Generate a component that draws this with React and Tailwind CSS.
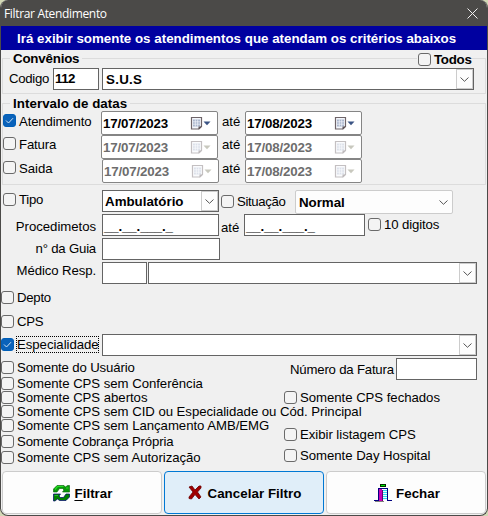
import React from "react";

function Check({ on, className = "" }) {
  return (
    <span
      className={`flex h-[13px] w-[13px] shrink-0 items-center justify-center rounded-[3px] border ${
        on ? "border-[#005fb8] bg-[#0a62ba]" : "border-[#6a6a6a] bg-[#f4f4f4]"
      } ${className}`}
    >
      {on && (
        <svg width="9" height="9" viewBox="0 0 9 9" fill="none" stroke="#cfe3f5" strokeWidth="1">
          <path d="M1 4.5 L3.5 7 L8 2.2" />
        </svg>
      )}
    </span>
  );
}

function Text({ children, className = "" }) {
  return <span className={`shrink-0 whitespace-nowrap leading-[16px] ${className}`}>{children}</span>;
}

function Chevron() {
  return (
    <svg width="9" height="5" viewBox="0 0 9 5" fill="none" stroke="#555" strokeWidth="1">
      <path d="M0.5 0.5 L4.5 4.3 L8.5 0.5" />
    </svg>
  );
}

function Field({ children, className = "" }) {
  return (
    <div className={`flex h-[22px] shrink-0 items-center border border-[#646464] bg-white text-[13.33px] font-bold ${className}`}>
      {children}
    </div>
  );
}

function Combo({ children, className = "" }) {
  return (
    <Field className={`justify-between ${className}`}>
      <Text className="mt-px">{children}</Text>
      <span className="flex h-[20px] w-[17px] shrink-0 items-center justify-center border border-[#cccccc] bg-[#fdfdfd]">
        <Chevron />
      </span>
    </Field>
  );
}

function DateField({ children, off, className = "" }) {
  return (
    <div
      className={`flex h-[24px] w-[117px] shrink-0 items-center rounded-[2px] border border-[#858585] bg-white pl-px text-[13.33px] font-bold ${
        off ? "text-[#6d6d6d]" : "text-black"
      } ${className}`}
    >
      <Text className="mt-px w-[87px] tracking-[-0.16px]">{children}</Text>
      <svg width="21" height="13" viewBox="0 0 21 13" className={off ? "opacity-40" : ""}>
        <path d="M1.5 0.5 H11.5 V9.5 L9 12 H1.5 Z" fill="#f4f7fc" stroke="#6e6468" strokeWidth="1.2" />
        <path d="M3 2.5H10V9.5H3Z" fill="#a9b5cc" />
        <path d="M3 4.8H10M3 7.2H10M5.3 2.5V9.5M7.7 2.5V9.5" stroke="#f4f7fc" strokeWidth="0.7" />
        <path d="M8.5 12.5V9.5H12Z" fill="#5d5357" />
        <path d="M13.5 4.5H20.5L17 8.2Z" fill={off ? "#77775f" : "#3b5484"} />
      </svg>
    </div>
  );
}

function DateRow({ label, on, from, to, fromClass = "", labelClass = "" }) {
  return (
    <div className="flex h-[24px]">
      <Check on={on} className={on ? "mt-[3px]" : "mt-[2px]"} />
      <Text className={`ml-[3px] w-[82px] ${on ? "mt-[3px]" : "mt-[2px]"} ${labelClass}`}>{label}</Text>
      <DateField off={!on} className={fromClass}>{from}</DateField>
      <Text className={on ? "ml-[4px] mt-[3px] w-[23px]" : "ml-[4px] mt-[2px] w-[23px]"}>até</Text>
      <DateField off={!on}>{to}</DateField>
    </div>
  );
}

function Option({ children, on, className = "" }) {
  return (
    <div className={`flex h-[13px] items-center ${className}`}>
      <Check on={on} />
      <span className="ml-[3px] shrink-0 whitespace-nowrap leading-[13px]">{children}</span>
    </div>
  );
}

function Legend({ children, className = "" }) {
  return (
    <Text className={`self-start bg-[#f0f0f0] px-[3px] text-[13.33px] font-bold ${className}`}>{children}</Text>
  );
}

function Button({ icon, children, active }) {
  return (
    <div
      className={`flex h-[43px] w-[160px] items-center justify-center gap-[4px] rounded-[4px] border pl-[2px] text-[13.33px] font-bold tracking-[0.05px] ${
        active ? "border-[#0078d4] bg-[#e0eef9]" : "border-[#cccccc] bg-[#fdfdfd]"
      }`}
    >
      {icon}
      <Text className="mt-[2px]">{children}</Text>
    </div>
  );
}

function RefreshIcon() {
  return (
    <svg width="17" height="18" viewBox="0 0 17 18">
      <path d="M0.5 8 V5 L4 1.5 H11 L12.5 3 L14.5 1.5 H16.5 V8 H9.5 L11 6 L9.5 4.5 H6.5 L4 8 Z" fill="#0a980a" stroke="#056005" strokeWidth="0.6" />
      <path d="M16.5 10 V13 L13 16.5 H6.5 L4.5 15 L2 17 H0.5 V10 H7.5 L6 12 L7.5 13.5 H10.5 L13 10 Z" fill="#008000" stroke="#000070" strokeWidth="0.7" />
      <path d="M2 5.5 L4.5 2.5 H10.5 M13 4 H15.5" fill="none" stroke="#22e022" strokeWidth="1.2" />
      <path d="M1.5 11.5 H5" stroke="#22c022" strokeWidth="1" />
    </svg>
  );
}

function CrossIcon() {
  return (
    <svg width="15" height="15" viewBox="0 0 15 15">
      <path d="M1 2 L4 1 L7 5 L11 1 L13 1 L13 3 L9.5 7 L13 12 L11 14 L7 9.5 L3.5 14 L1 13.5 L1 12 L5 7 Z" fill="#a00000" stroke="#6c0000" strokeWidth="0.8" />
    </svg>
  );
}

function DoorIcon() {
  return (
    <svg width="18" height="18" viewBox="0 0 18 18" shapeRendering="crispEdges">
      <path d="M6 0H12V3H6Z" fill="#003000" />
      <path d="M7 1H11V2H7Z" fill="#00e800" />
      <path d="M0 16.5H4.5V4.5H13.5V16.5H18" fill="none" stroke="#000080" strokeWidth="1" />
      <path d="M9 5H13V16H9Z" fill="#e8ffff" />
      <path d="M9.5 6V16M11.5 6V16" stroke="#30d8f0" strokeWidth="1" strokeDasharray="1 1" />
      <path d="M10.5 5V16M12.5 5V16" stroke="#30d8f0" strokeWidth="1" strokeDasharray="1 1" strokeDashoffset="1" />
      <path d="M5 5H8V6H9V17H5Z" fill="#c800b8" />
      <path d="M8.5 6V17" stroke="#600070" />
      <path d="M1 17.5H10" stroke="#808080" />
    </svg>
  );
}

export default function App() {
  return (
    <div className="h-[516px] w-[488px] overflow-hidden bg-[#d2d8b5] font-['Liberation_Sans',Arial,sans-serif] text-[13.2px] tracking-[-0.04px] text-black">
      <div className="flex h-[516px] flex-col overflow-hidden rounded-[8px] border-x border-b border-[#4b4a48] bg-[#f0f0f0]">
        <header className="-mx-px flex h-[26px] shrink-0 items-center justify-between bg-[#4b4a48] pl-[4px] pr-[10px] text-white">
          <Text className="mt-[2px] font-['Open_Sans','Noto_Sans',sans-serif] text-[12px] tracking-[-0.34px]">Filtrar Atendimento</Text>
          <svg width="11" height="11" viewBox="0 0 11 11" stroke="#f0f0f0" strokeWidth="1">
            <path d="M0.5 0.5 L10.5 10.5 M10.5 0.5 L0.5 10.5" />
          </svg>
        </header>
        <div className="flex h-[24px] shrink-0 items-center bg-[#0000a0] pl-[16px] text-[13.33px] font-bold text-white">
          <Text className="mt-px tracking-[0.01px]">Irá exibir somente os atendimentos que atendam os critérios abaixos</Text>
        </div>

        <section className="ml-px mt-[8px] h-[36px] w-[484px] shrink-0 border border-[#dcdcdc]">
          <div className="-mt-[9px] flex h-[18px] items-start justify-between pl-[7px] pr-[14px]">
            <Legend className="mt-px tracking-[-0.2px]">Convênios</Legend>
            <div className="flex h-[16px] items-center bg-[#f0f0f0] pl-px pt-[3px] text-[13.33px] font-bold">
              <Check />
              <Text className="ml-[3px] w-[37px] tracking-[-0.3px]">Todos</Text>
            </div>
          </div>
          <div className="flex pl-[6px]">
            <Text className="mt-[3px] w-[44px] tracking-[-0.3px]">Codigo</Text>
            <Field className="w-[46px] pl-px tracking-[-0.5px]">112</Field>
            <Combo className="ml-[3px] w-[372px] pl-[3px] tracking-[0.3px]">S.U.S</Combo>
          </div>
        </section>

        <section className="ml-px mt-[9px] h-[82px] w-[484px] shrink-0 border border-[#dcdcdc]">
          <div className="-mt-[8px] flex h-[15px] pl-[7px]">
            <Legend className="tracking-[0.05px]">Intervalo de datas</Legend>
          </div>
          <DateRow label="Atendimento" on from="17/07/2023" to="17/08/2023" labelClass="tracking-[-0.15px]" />
          <DateRow label="Fatura" from="17/07/2023" to="17/08/2023" labelClass="tracking-[-0.15px]" />
          <DateRow label="Saida" from="17/07/2023" to="17/08/2023" fromClass="ml-px -mr-px" />
        </section>

        <section className="mt-[5px] h-[96px] shrink-0">
          <div className="flex h-[24px] pl-[2px]">
            <Check className="mt-[3px]" />
            <Text className="ml-[3px] mt-[2px] w-[83px] tracking-[-0.3px]">Tipo</Text>
            <Combo className="w-[117px] pl-[2px] tracking-[0px]">Ambulatório</Combo>
            <Check className="ml-[2px] mt-[5px]" />
            <Text className="ml-[3px] mt-[4px] w-[58px] tracking-[-0.35px]">Situação</Text>
            <div className="flex h-[24px] w-[158px] shrink-0 items-center justify-between rounded-[2px] border border-[#cccccc] bg-[#fdfdfd] pl-[3px] pr-[4px] text-[13.33px] font-bold">
              <Text className="mt-px">Normal</Text>
              <Chevron />
            </div>
          </div>
          <div className="flex h-[24px]">
            <Text className="mt-[5px] w-[95px] text-right">Procedimetos</Text>
            <Field className="ml-[6px] w-[117px] pl-px tracking-[-0.15px]">
              <Text className="mt-[4px]">__.__.___._</Text>
            </Field>
            <Text className="ml-[2px] mt-[6px] w-[23px]">até</Text>
            <Field className="w-[121px] pl-px tracking-[-0.15px]">
              <Text className="mt-[4px]">__.__.___._</Text>
            </Field>
            <Check className="ml-[3px] mt-[4px]" />
            <Text className="ml-[3px] mt-[3px] tracking-[-0.12px]">10 digitos</Text>
          </div>
          <div className="flex h-[24px]">
            <Text className="mt-[3px] w-[95px] text-right tracking-[-0.2px]">n° da Guia</Text>
            <Field className="ml-[6px] w-[118px]" />
          </div>
          <div className="flex h-[24px]">
            <Text className="mt-px w-[95px] text-right tracking-[-0.1px]">Médico Resp.</Text>
            <Field className="ml-[6px] w-[45px]" />
            <Combo className="ml-px w-[329px]" />
          </div>
        </section>

        <section className="h-[72px] shrink-0">
          <Option className="mt-[5px] tracking-[-0.25px]">Depto</Option>
          <Option className="mt-[11px] tracking-[-0.3px]">CPS</Option>
          <div className="mt-[6px] flex h-[22px] items-start">
            <Check on className="mt-[4px]" />
            <div className="ml-[2px] mt-[2px] flex h-[17px] w-[83px] items-center border border-dotted border-black">
              <Text>Especialidade</Text>
            </div>
            <Combo className="ml-[3px] w-[375px]" />
          </div>
        </section>

        <section className="flex h-[113px] shrink-0">
          <div className="w-[283px] shrink-0">
            <Option className="mt-[3px] tracking-[-0.14px]">Somente do Usuário</Option>
            <Option className="mt-[3px]">Somente CPS sem Conferência</Option>
            <Option className="mt-[1px]">Somente CPS abertos</Option>
            <Option className="mt-[1px]">Somente CPS sem CID ou Especialidade ou Cód. Principal</Option>
            <Option className="mt-[1px]">Somente CPS sem Lançamento AMB/EMG</Option>
            <Option className="mt-[3px] tracking-[-0.14px]">Somente Cobrança Própria</Option>
            <Option className="mt-[3px]">Somente CPS sem Autorização</Option>
          </div>
          <div className="flex-1">
            <div className="flex h-[22px]">
              <Text className="ml-[6px] mt-[4px] w-[106px] tracking-[-0.2px]">Número da Fatura</Text>
              <Field className="w-[81px]" />
            </div>
            <Option className="mt-[11px]">Somente CPS fechados</Option>
            <Option className="mt-[24px]">Exibir listagem CPS</Option>
            <Option className="mt-[8px]">Somente Day Hospital</Option>
          </div>
        </section>

        <footer className="flex gap-[2px] pl-px">
          <Button icon={<RefreshIcon />}><span className="underline underline-offset-2">F</span>iltrar</Button>
          <Button icon={<CrossIcon />} active>Cancelar Filtro</Button>
          <Button icon={<DoorIcon />}>Fechar</Button>
        </footer>
      </div>
    </div>
  );
}
